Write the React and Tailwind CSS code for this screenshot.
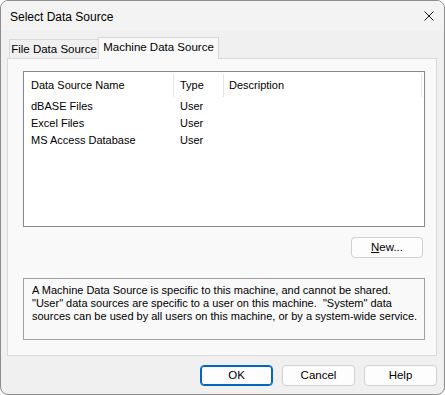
import React from "react";

const rows = [
  { name: "dBASE Files", type: "User" },
  { name: "Excel Files", type: "User" },
  { name: "MS Access Database", type: "User" },
];

const Btn = ({ children, primary, className = "" }) => (
  <button
    className={`h-[21px] rounded-[4px] bg-[#fdfdfd] text-[11.5px] text-black ${
      primary ? "border border-[#0067c0] shadow-[inset_0_0_0_1px_#0067c0]" : "border border-[#d0d0d0]"
    } ${className}`}
  >
    {children}
  </button>
);

export default function App() {
  return (
    <div
      className="w-[445px] h-[395px] bg-[#f0f0f0] border border-[#8c8c8c] rounded-[8px] overflow-hidden flex flex-col text-black"
      style={{ fontFamily: '"Liberation Sans", Arial, sans-serif' }}
    >
      {/* Title bar */}
      <div className="h-[30px] shrink-0 flex items-center justify-between pl-[9px] pr-[10px] bg-[#f3f3f3]">
        <span className="text-[12px] pt-[1px]">Select Data Source</span>
        <svg className="w-[10px] h-[10px]" viewBox="0 0 10 10" fill="none" stroke="#1a1a1a" strokeWidth="1">
          <path d="M0.5 0.5L9.5 9.5M9.5 0.5L0.5 9.5" />
        </svg>
      </div>

      {/* Tabs */}
      <div className="ml-[6px] mt-[6px] w-[430px] flex flex-col">
        <div className="flex items-end h-[21px] relative z-10 text-[11.5px] whitespace-nowrap">
          <div className="ml-[2px] h-[19px] w-[90px] border border-b-0 border-[#d9d9d9] bg-[#f0f0f0] flex items-center justify-center pt-[2px]">
            File Data Source
          </div>
          <div className="h-[22px] -mb-[1px] w-[121px] -ml-[1px] border border-b-0 border-[#d9d9d9] bg-[#f9f9f9] flex items-center justify-center pb-[2px]">
            Machine Data Source
          </div>
        </div>

        {/* Panel */}
        <div className="h-[298px] border border-[#d9d9d9] bg-[#f9f9f9] pl-[15px] pr-[11px] pt-[12px]">
          {/* List */}
          <div className="h-[156px] w-[402px] border border-[#828790] bg-white text-[11px]">
            <div className="flex h-[25px] items-center">
              <div className="w-[150px] pl-[7px] h-[23px] flex items-center border-r border-[#e5e5e5] mt-[2px]">
                Data Source Name
              </div>
              <div className="w-[50px] pl-[6px] h-[23px] flex items-center border-r border-[#e5e5e5] mt-[2px]">
                Type
              </div>
              <div className="w-[198px] pl-[5px] h-[23px] flex items-center border-r border-[#e5e5e5] mt-[2px]">
                Description
              </div>
            </div>
            <div className="pt-[1px]">
              {rows.map((r) => (
                <div key={r.name} className="flex h-[17px] items-center">
                  <div className="w-[150px] pl-[7px]">{r.name}</div>
                  <div className="w-[50px] pl-[6px]">{r.type}</div>
                </div>
              ))}
            </div>
          </div>

          <div className="flex justify-end mt-[10px] w-[402px] pr-[2px]">
            <Btn className="w-[72px]">
              <span className="underline">N</span>ew...
            </Btn>
          </div>

          {/* Info box */}
          <div className="mt-[20px] w-[402px] h-[62px] border border-[#a0a0a0] bg-[#f9f9f9] pl-[8px] pt-[5px] text-[11px] leading-[13px] whitespace-nowrap">
            <p>A Machine Data Source is specific to this machine, and cannot be shared.</p>
            <p className="whitespace-pre">"User" data sources are specific to a user on this machine.  "System" data</p>
            <p>sources can be used by all users on this machine, or by a system-wide service.</p>
          </div>
        </div>
      </div>

      {/* Footer buttons */}
      <div className="flex justify-end gap-[9px] pr-[7px] mt-[9px]">
        <Btn primary className="w-[73px]">OK</Btn>
        <Btn className="w-[73px]">Cancel</Btn>
        <Btn className="w-[73px]">Help</Btn>
      </div>
    </div>
  );
}
